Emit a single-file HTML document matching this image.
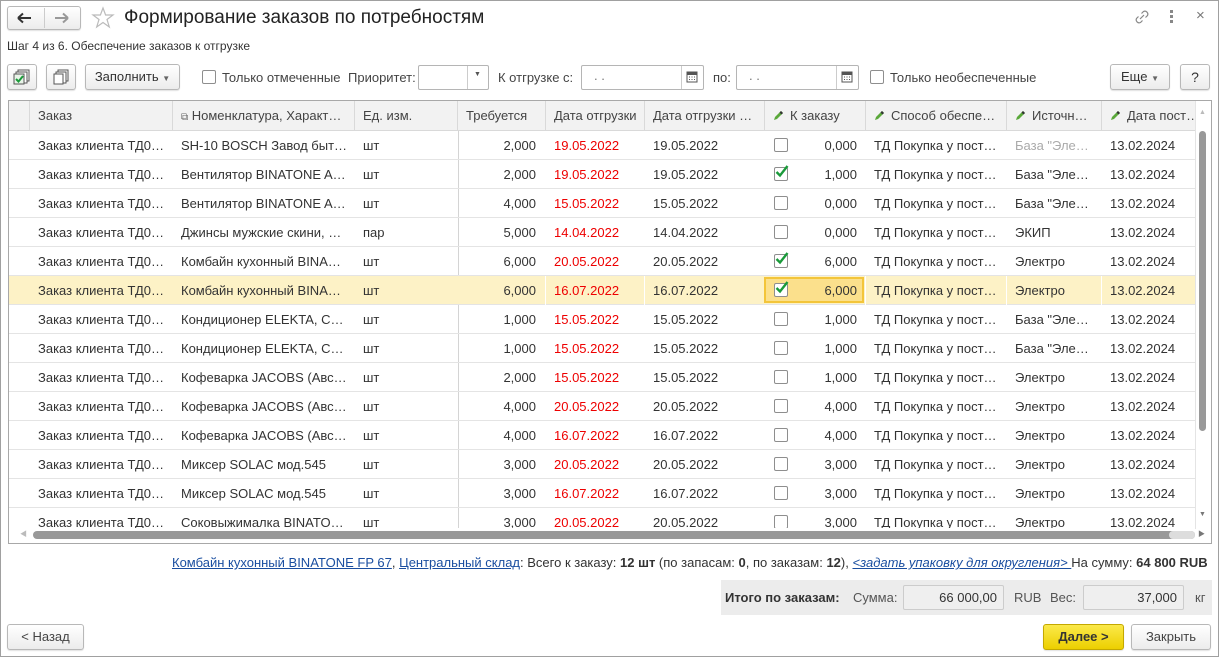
<!DOCTYPE html>
<html><head><meta charset="utf-8"><style>
*{box-sizing:border-box;margin:0;padding:0}
body{width:1219px;height:657px;background:#fff;font-family:"Liberation Sans","Noto Sans CJK SC",sans-serif;font-size:13px;color:#333;position:relative;overflow:hidden}
.win{position:absolute;left:0;top:0;width:1219px;height:657px;border:1px solid #a0a0a0}
.abs{position:absolute;white-space:nowrap}
.btn{position:absolute;border:1px solid #b8b8b8;border-radius:3px;background:linear-gradient(#fff,#ececec);box-shadow:0 1px 1px rgba(0,0,0,.12);text-align:center}
.inp{position:absolute;border:1px solid #b5b5b5;border-radius:2px;background:#fff}
.cb{position:absolute;width:14px;height:14px;border:1px solid #8e8e8e;border-radius:2px;background:#fff}
.tbl{position:absolute;left:8px;top:100px;width:1204px;height:444px;border:1px solid #a8a8a8;overflow:hidden}
.hd{position:absolute;top:0;height:30px;background:#f2f2f2;border-right:1px solid #d9d9d9;border-bottom:1px solid #d9d9d9;line-height:29px;padding-left:8px;color:#444;white-space:nowrap;overflow:hidden}
.row{position:absolute;left:0;width:1186px;height:29px;border-bottom:1px solid #e4e4e4}
.row span{position:absolute;top:0;line-height:29px;white-space:nowrap}
.r{text-align:right}
.red{color:#e00}
.sel{background:#fdf2c6}
.pen{display:inline-block;width:11px;height:11px;margin-right:6px;vertical-align:-1px}
a{color:#1a4ea0;text-decoration:underline}
</style></head><body>
<div class="win"></div>
<!-- nav -->
<div class="btn" style="left:7px;top:6px;width:74px;height:24px;"></div>
<div class="abs" style="left:44px;top:8px;width:1px;height:20px;background:#ccc"></div>
<svg class="abs" style="left:17px;top:12px" width="16" height="12"><path d="M1 6H14M1 6L6 1.5M1 6L6 10.5" stroke="#333" stroke-width="2" fill="none"/></svg>
<svg class="abs" style="left:54px;top:12px" width="16" height="12"><path d="M1 6H14M14 6L9 1.5M14 6L9 10.5" stroke="#999" stroke-width="2" fill="none"/></svg>
<svg class="abs" style="left:91px;top:6px" width="24" height="24"><path d="M12 2L14.6 9H22L16 13.5L18.3 21L12 16.5L5.7 21L8 13.5L2 9H9.4Z" fill="none" stroke="#bbb" stroke-width="1.2"/></svg>
<div class="abs" style="left:124px;top:6px;font-size:19px;color:#222;line-height:24px">Формирование заказов по потребностям</div>
<svg class="abs" style="left:1133px;top:8px" width="18" height="18"><path d="M7 11L11 7M8.5 5.5L10.5 3.5a3 3 0 0 1 4 4L12.5 9.5M9.5 12.5L7.5 14.5a3 3 0 0 1-4-4L5.5 8.5" stroke="#888" fill="none" stroke-width="1.2"/></svg>
<div class="abs" style="left:1170px;top:10px;width:3px;height:3px;background:#888;box-shadow:0 5px 0 #888,0 10px 0 #888"></div>
<div class="abs" style="left:1196px;top:7px;color:#777;font-size:15px">×</div>
<div class="abs" style="left:7px;top:39px;font-size:12px;color:#333">Шаг 4 из 6. Обеспечение заказов к отгрузке</div>
<!-- toolbar -->
<div class="btn" style="left:7px;top:64px;width:30px;height:26px"></div>
<svg class="abs" style="left:13px;top:69px" width="18" height="16"><rect x="5" y="1" width="11" height="11" fill="#fff" stroke="#555"/><rect x="3" y="3" width="11" height="11" fill="#fff" stroke="#555"/><rect x="1" y="5" width="10" height="10" fill="#e8f4e8" stroke="#555"/><path d="M3 10L5.5 12.5L10 7" stroke="#1a9a3a" stroke-width="2" fill="none"/></svg>
<div class="btn" style="left:46px;top:64px;width:30px;height:26px"></div>
<svg class="abs" style="left:52px;top:69px" width="18" height="16"><rect x="6" y="1" width="10" height="11" fill="#fff" stroke="#555"/><rect x="4" y="3" width="10" height="11" fill="#fff" stroke="#555"/><rect x="2" y="5" width="9" height="10" fill="#fff" stroke="#555"/></svg>
<div class="btn" style="left:85px;top:64px;width:95px;height:26px;line-height:24px;color:#333">Заполнить <span style="font-size:8px;color:#666">▼</span></div>
<div class="cb" style="left:202px;top:70px"></div>
<div class="abs" style="left:222px;top:70px;color:#444">Только отмеченные</div>
<div class="abs" style="left:348px;top:70px;color:#444">Приоритет:</div>
<div class="inp" style="left:418px;top:65px;width:71px;height:25px"></div>
<div class="abs" style="left:467px;top:66px;width:1px;height:23px;background:#ccc"></div>
<div class="abs" style="left:474px;top:71px;font-size:7px;color:#555">▼</div>
<div class="abs" style="left:498px;top:70px;color:#444">К отгрузке с:</div>
<div class="inp" style="left:581px;top:65px;width:123px;height:25px"></div>
<div class="abs" style="left:594px;top:68px;color:#777">. .</div>
<div class="abs" style="left:681px;top:66px;width:1px;height:23px;background:#ccc"></div>
<svg class="abs" style="left:686px;top:71px" width="12" height="12"><rect x="1" y="1" width="10" height="10" fill="none" stroke="#555"/><rect x="1" y="1" width="10" height="3" fill="#555"/><path d="M3 6h1M5.5 6h1M8 6h1M3 8.5h1M5.5 8.5h1M8 8.5h1" stroke="#555"/></svg>
<div class="abs" style="left:713px;top:70px;color:#444">по:</div>
<div class="inp" style="left:736px;top:65px;width:123px;height:25px"></div>
<div class="abs" style="left:749px;top:68px;color:#777">. .</div>
<div class="abs" style="left:836px;top:66px;width:1px;height:23px;background:#ccc"></div>
<svg class="abs" style="left:841px;top:71px" width="12" height="12"><rect x="1" y="1" width="10" height="10" fill="none" stroke="#555"/><rect x="1" y="1" width="10" height="3" fill="#555"/><path d="M3 6h1M5.5 6h1M8 6h1M3 8.5h1M5.5 8.5h1M8 8.5h1" stroke="#555"/></svg>
<div class="cb" style="left:870px;top:70px"></div>
<div class="abs" style="left:890px;top:70px;color:#444">Только необеспеченные</div>
<div class="btn" style="left:1110px;top:64px;width:60px;height:26px;line-height:24px">Еще <span style="font-size:8px;color:#666">▼</span></div>
<div class="btn" style="left:1180px;top:64px;width:30px;height:26px;line-height:24px;font-size:14px">?</div>
<!-- table -->
<div class="tbl">
<div class="hd" style="left:0;width:21px;padding:0"></div>
<div class="hd" style="left:21px;width:143px">Заказ</div>
<div class="hd" style="left:164px;width:182px"><span style="font-size:10px;color:#666">⧉</span> Номенклатура, Характ…</div>
<div class="hd" style="left:346px;width:103px">Ед. изм.</div>
<div class="hd" style="left:449px;width:88px">Требуется</div>
<div class="hd" style="left:537px;width:99px">Дата отгрузки</div>
<div class="hd" style="left:636px;width:120px">Дата отгрузки …</div>
<div class="hd" style="left:756px;width:101px"><svg class="pen" viewBox="0 0 11 11"><path d="M1 10L2 7L8 1L10 3L4 9Z" fill="#5aa83a"/><path d="M6.5 2.5L8 1L10 3L8.5 4.5Z" fill="#333"/></svg>К заказу</div>
<div class="hd" style="left:857px;width:141px"><svg class="pen" viewBox="0 0 11 11"><path d="M1 10L2 7L8 1L10 3L4 9Z" fill="#5aa83a"/><path d="M6.5 2.5L8 1L10 3L8.5 4.5Z" fill="#333"/></svg>Способ обеспе…</div>
<div class="hd" style="left:998px;width:95px"><svg class="pen" viewBox="0 0 11 11"><path d="M1 10L2 7L8 1L10 3L4 9Z" fill="#5aa83a"/><path d="M6.5 2.5L8 1L10 3L8.5 4.5Z" fill="#333"/></svg>Источн…</div>
<div class="hd" style="left:1093px;width:94px"><svg class="pen" viewBox="0 0 11 11"><path d="M1 10L2 7L8 1L10 3L4 9Z" fill="#5aa83a"/><path d="M6.5 2.5L8 1L10 3L8.5 4.5Z" fill="#333"/></svg>Дата пост…</div>
<div class="abs" style="left:449px;top:30px;width:1px;height:400px;background:#d4d4d4"></div>

<div class="row" style="top:30px"><span style="left:29px">Заказ клиента ТД0…</span><span style="left:172px">SH-10 BOSCH Завод быт…</span><span style="left:354px">шт</span><span class="r" style="left:449px;width:78px">2,000</span><span class="red" style="left:545px">19.05.2022</span><span style="left:644px">19.05.2022</span><span class="cb" style="left:765px;top:7px"></span><span class="r" style="left:790px;width:58px">0,000</span><span style="left:865px">ТД Покупка у пост…</span><span style="left:1006px;color:#aaa">База "Эле…</span><span style="left:1101px">13.02.2024</span></div>
<div class="row" style="top:59px"><span style="left:29px">Заказ клиента ТД0…</span><span style="left:172px">Вентилятор BINATONE A…</span><span style="left:354px">шт</span><span class="r" style="left:449px;width:78px">2,000</span><span class="red" style="left:545px">19.05.2022</span><span style="left:644px">19.05.2022</span><span class="cb" style="left:765px;top:7px"></span><svg class="abs" style="left:765px;top:3px" width="16" height="16"><path d="M2.5 9L6 12.5L13.5 3" stroke="#1a9a3a" stroke-width="2.4" fill="none"/></svg><span class="r" style="left:790px;width:58px">1,000</span><span style="left:865px">ТД Покупка у пост…</span><span style="left:1006px">База "Эле…</span><span style="left:1101px">13.02.2024</span></div>
<div class="row" style="top:88px"><span style="left:29px">Заказ клиента ТД0…</span><span style="left:172px">Вентилятор BINATONE A…</span><span style="left:354px">шт</span><span class="r" style="left:449px;width:78px">4,000</span><span class="red" style="left:545px">15.05.2022</span><span style="left:644px">15.05.2022</span><span class="cb" style="left:765px;top:7px"></span><span class="r" style="left:790px;width:58px">0,000</span><span style="left:865px">ТД Покупка у пост…</span><span style="left:1006px">База "Эле…</span><span style="left:1101px">13.02.2024</span></div>
<div class="row" style="top:117px"><span style="left:29px">Заказ клиента ТД0…</span><span style="left:172px">Джинсы мужские скини, …</span><span style="left:354px">пар</span><span class="r" style="left:449px;width:78px">5,000</span><span class="red" style="left:545px">14.04.2022</span><span style="left:644px">14.04.2022</span><span class="cb" style="left:765px;top:7px"></span><span class="r" style="left:790px;width:58px">0,000</span><span style="left:865px">ТД Покупка у пост…</span><span style="left:1006px">ЭКИП</span><span style="left:1101px">13.02.2024</span></div>
<div class="row" style="top:146px"><span style="left:29px">Заказ клиента ТД0…</span><span style="left:172px">Комбайн кухонный BINA…</span><span style="left:354px">шт</span><span class="r" style="left:449px;width:78px">6,000</span><span class="red" style="left:545px">20.05.2022</span><span style="left:644px">20.05.2022</span><span class="cb" style="left:765px;top:7px"></span><svg class="abs" style="left:765px;top:3px" width="16" height="16"><path d="M2.5 9L6 12.5L13.5 3" stroke="#1a9a3a" stroke-width="2.4" fill="none"/></svg><span class="r" style="left:790px;width:58px">6,000</span><span style="left:865px">ТД Покупка у пост…</span><span style="left:1006px">Электро</span><span style="left:1101px">13.02.2024</span></div>
<div class="row sel" style="top:175px"><span style="left:536px;width:1px;height:29px;background:#fff"></span><span style="left:635px;width:1px;height:29px;background:#fff"></span><span style="left:856px;width:1px;height:29px;background:#fff"></span><span style="left:997px;width:1px;height:29px;background:#fff"></span><span style="left:1092px;width:1px;height:29px;background:#fff"></span><span style="left:755px;top:1px;width:100px;height:26px;background:#fbe08c;border:2px solid #f3c53a"></span><span style="left:29px">Заказ клиента ТД0…</span><span style="left:172px">Комбайн кухонный BINA…</span><span style="left:354px">шт</span><span class="r" style="left:449px;width:78px">6,000</span><span class="red" style="left:545px">16.07.2022</span><span style="left:644px">16.07.2022</span><span class="cb" style="left:765px;top:7px"></span><svg class="abs" style="left:765px;top:3px" width="16" height="16"><path d="M2.5 9L6 12.5L13.5 3" stroke="#1a9a3a" stroke-width="2.4" fill="none"/></svg><span class="r" style="left:790px;width:58px">6,000</span><span style="left:865px">ТД Покупка у пост…</span><span style="left:1006px">Электро</span><span style="left:1101px">13.02.2024</span></div>
<div class="row" style="top:204px"><span style="left:29px">Заказ клиента ТД0…</span><span style="left:172px">Кондиционер ELEKTA, C…</span><span style="left:354px">шт</span><span class="r" style="left:449px;width:78px">1,000</span><span class="red" style="left:545px">15.05.2022</span><span style="left:644px">15.05.2022</span><span class="cb" style="left:765px;top:7px"></span><span class="r" style="left:790px;width:58px">1,000</span><span style="left:865px">ТД Покупка у пост…</span><span style="left:1006px">База "Эле…</span><span style="left:1101px">13.02.2024</span></div>
<div class="row" style="top:233px"><span style="left:29px">Заказ клиента ТД0…</span><span style="left:172px">Кондиционер ELEKTA, C…</span><span style="left:354px">шт</span><span class="r" style="left:449px;width:78px">1,000</span><span class="red" style="left:545px">15.05.2022</span><span style="left:644px">15.05.2022</span><span class="cb" style="left:765px;top:7px"></span><span class="r" style="left:790px;width:58px">1,000</span><span style="left:865px">ТД Покупка у пост…</span><span style="left:1006px">База "Эле…</span><span style="left:1101px">13.02.2024</span></div>
<div class="row" style="top:262px"><span style="left:29px">Заказ клиента ТД0…</span><span style="left:172px">Кофеварка JACOBS (Авс…</span><span style="left:354px">шт</span><span class="r" style="left:449px;width:78px">2,000</span><span class="red" style="left:545px">15.05.2022</span><span style="left:644px">15.05.2022</span><span class="cb" style="left:765px;top:7px"></span><span class="r" style="left:790px;width:58px">1,000</span><span style="left:865px">ТД Покупка у пост…</span><span style="left:1006px">Электро</span><span style="left:1101px">13.02.2024</span></div>
<div class="row" style="top:291px"><span style="left:29px">Заказ клиента ТД0…</span><span style="left:172px">Кофеварка JACOBS (Авс…</span><span style="left:354px">шт</span><span class="r" style="left:449px;width:78px">4,000</span><span class="red" style="left:545px">20.05.2022</span><span style="left:644px">20.05.2022</span><span class="cb" style="left:765px;top:7px"></span><span class="r" style="left:790px;width:58px">4,000</span><span style="left:865px">ТД Покупка у пост…</span><span style="left:1006px">Электро</span><span style="left:1101px">13.02.2024</span></div>
<div class="row" style="top:320px"><span style="left:29px">Заказ клиента ТД0…</span><span style="left:172px">Кофеварка JACOBS (Авс…</span><span style="left:354px">шт</span><span class="r" style="left:449px;width:78px">4,000</span><span class="red" style="left:545px">16.07.2022</span><span style="left:644px">16.07.2022</span><span class="cb" style="left:765px;top:7px"></span><span class="r" style="left:790px;width:58px">4,000</span><span style="left:865px">ТД Покупка у пост…</span><span style="left:1006px">Электро</span><span style="left:1101px">13.02.2024</span></div>
<div class="row" style="top:349px"><span style="left:29px">Заказ клиента ТД0…</span><span style="left:172px">Миксер SOLAC мод.545</span><span style="left:354px">шт</span><span class="r" style="left:449px;width:78px">3,000</span><span class="red" style="left:545px">20.05.2022</span><span style="left:644px">20.05.2022</span><span class="cb" style="left:765px;top:7px"></span><span class="r" style="left:790px;width:58px">3,000</span><span style="left:865px">ТД Покупка у пост…</span><span style="left:1006px">Электро</span><span style="left:1101px">13.02.2024</span></div>
<div class="row" style="top:378px"><span style="left:29px">Заказ клиента ТД0…</span><span style="left:172px">Миксер SOLAC мод.545</span><span style="left:354px">шт</span><span class="r" style="left:449px;width:78px">3,000</span><span class="red" style="left:545px">16.07.2022</span><span style="left:644px">16.07.2022</span><span class="cb" style="left:765px;top:7px"></span><span class="r" style="left:790px;width:58px">3,000</span><span style="left:865px">ТД Покупка у пост…</span><span style="left:1006px">Электро</span><span style="left:1101px">13.02.2024</span></div>
<div class="row" style="top:407px;border:none"><span style="left:29px">Заказ клиента ТД0…</span><span style="left:172px">Соковыжималка  BINATO…</span><span style="left:354px">шт</span><span class="r" style="left:449px;width:78px">3,000</span><span class="red" style="left:545px">20.05.2022</span><span style="left:644px">20.05.2022</span><span class="cb" style="left:765px;top:7px"></span><span class="r" style="left:790px;width:58px">3,000</span><span style="left:865px">ТД Покупка у пост…</span><span style="left:1006px">Электро</span><span style="left:1101px">13.02.2024</span></div>
<!-- scrollbars -->
<div class="abs" style="left:0;top:427px;width:1186px;height:16px;background:#fff"></div>
<div class="abs" style="left:24px;top:430px;width:1162px;height:8px;border-radius:4px;background:#999"></div>
<div class="abs" style="left:1160px;top:430px;width:26px;height:8px;border-radius:4px;background:#ddd"></div>
<div class="abs" style="left:11px;top:428px;font-size:7px;color:#bbb">◀</div>
<div class="abs" style="left:1189px;top:428px;font-size:7px;color:#777">▶</div>
<div class="abs" style="left:1186px;top:0;width:17px;height:428px;background:#fff;border-left:1px solid #e4e4e4"></div>
<div class="abs" style="left:1190px;top:8px;font-size:7px;color:#bbb">▲</div>
<div class="abs" style="left:1190px;top:30px;width:7px;height:300px;border-radius:4px;background:#999"></div>
<div class="abs" style="left:1190px;top:410px;font-size:7px;color:#777">▼</div>
</div>
<!-- footer -->
<div class="abs" style="left:172px;top:555px;color:#333"><a>Комбайн кухонный BINATONE FP 67</a>, <a>Центральный склад</a>: Всего к заказу: <b>12 шт</b> (по запасам: <b>0</b>, по заказам: <b>12</b>), <a style="font-style:italic">&lt;задать упаковку для округления&gt; </a>На сумму: <b>64 800 RUB</b></div>
<div class="abs" style="left:721px;top:580px;width:491px;height:35px;background:#ececec"></div>
<div class="abs" style="left:725px;top:590px;font-weight:bold;color:#333">Итого по заказам:</div>
<div class="abs" style="left:853px;top:590px;color:#555">Сумма:</div>
<div class="inp" style="left:903px;top:585px;width:101px;height:25px;background:#efefef;border-color:#ccc"></div>
<div class="abs" style="left:903px;top:590px;width:94px;text-align:right">66 000,00</div>
<div class="abs" style="left:1014px;top:590px;color:#555">RUB</div>
<div class="abs" style="left:1050px;top:590px;color:#555">Вес:</div>
<div class="inp" style="left:1083px;top:585px;width:101px;height:25px;background:#efefef;border-color:#ccc"></div>
<div class="abs" style="left:1083px;top:590px;width:94px;text-align:right">37,000</div>
<div class="abs" style="left:1195px;top:590px;color:#555">кг</div>
<div class="btn" style="left:7px;top:624px;width:77px;height:26px;line-height:24px;color:#444">&lt; Назад</div>
<div class="btn" style="left:1043px;top:624px;width:81px;height:26px;line-height:24px;background:linear-gradient(#fbe94a,#eccf00);border-color:#c4a800;font-weight:bold;color:#333">Далее &gt;</div>
<div class="btn" style="left:1131px;top:624px;width:80px;height:26px;line-height:24px;color:#444">Закрыть</div>
</body></html>
